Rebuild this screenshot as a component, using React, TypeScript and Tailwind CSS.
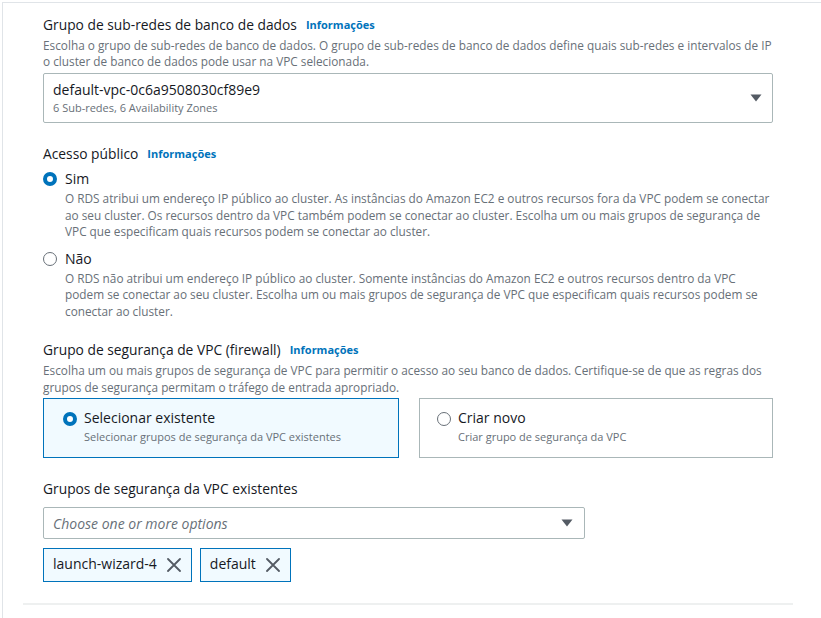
const font = { fontFamily: '"Open Sans", "Liberation Sans", sans-serif' };

function Info() {
  return <span className="ml-[9px] text-[11px] font-bold text-[#0073bb]">Informações</span>;
}

function Caret() {
  return (
    <svg width="12" height="8" viewBox="0 0 12 8" className="shrink-0">
      <path d="M0.5 0.5 H11.5 L6 7.5 Z" fill="#545b64" />
    </svg>
  );
}

function Close() {
  return (
    <svg width="14" height="14" viewBox="0 0 14 14" className="shrink-0">
      <path d="M1 1 L13 13 M13 1 L1 13" stroke="#545b64" strokeWidth="1.8" strokeLinecap="round" />
    </svg>
  );
}

function Radio({ checked }: { checked: boolean }) {
  return checked ? (
    <span className="block h-[14px] w-[14px] shrink-0 rounded-full border-[4px] border-[#0073bb] bg-white" />
  ) : (
    <span className="block h-[14px] w-[14px] shrink-0 rounded-full border-[1.5px] border-[#687078] bg-white" />
  );
}

function Token({ label }: { label: string }) {
  return (
    <div className="flex h-[34px] items-center gap-[10px] border border-[#0073bb] bg-[#f1faff] pl-[9px] pr-[10px] text-[14px] text-[#16191f]">
      <span className="-mt-[4px]">{label}</span>
      <Close />
    </div>
  );
}

export default function App() {
  return (
    <div className="h-[618px] w-[821px] overflow-hidden bg-white pl-[2px] pt-[2px]" style={font}>
      <div className="h-full border-l border-t border-[#e0e4e8] pl-[40px] pt-[13px]">
        {/* Grupo de sub-redes */}
        <div className="flex items-center text-[13.8px] leading-[18px] text-[#16191f]">
          Grupo de sub-redes de banco de dados <Info />
        </div>
        <p className="mt-[3px] w-[736px] text-[11.8px] leading-[16px] text-[#687078]">
          Escolha o grupo de sub-redes de banco de dados. O grupo de sub-redes de banco de dados define quais sub-redes e intervalos de IP o cluster de banco de dados pode usar na VPC selecionada.
        </p>
        <div className="mt-[4px] flex h-[50px] w-[730px] items-center justify-between rounded-[2px] border border-[#aab7b8] pl-[9px] pr-[10px]">
          <div>
            <div className="text-[14px] leading-[20px] text-[#16191f]">default-vpc-0c6a9508030cf89e9</div>
            <div className="text-[11px] leading-[16px] text-[#687078]">6 Sub-redes, 6 Availability Zones</div>
          </div>
          <Caret />
        </div>

        {/* Acesso público */}
        <div className="mt-[22px] flex items-center text-[13.8px] leading-[18px] text-[#16191f]">
          Acesso público <Info />
        </div>
        <div className="mt-[6px] flex items-center gap-[8px]">
          <Radio checked />
          <span className="text-[14px] leading-[20px] text-[#16191f]">Sim</span>
        </div>
        <p className="ml-[22px] mt-[1px] w-[712px] text-[11.8px] leading-[16.5px] text-[#687078]">
          O RDS atribui um endereço IP público ao cluster. As instâncias do Amazon EC2 e outros recursos fora da VPC podem se conectar ao seu cluster. Os recursos dentro da VPC também podem se conectar ao cluster. Escolha um ou mais grupos de segurança de VPC que especificam quais recursos podem se conectar ao cluster.
        </p>
        <div className="mt-[9px] flex items-center gap-[8px]">
          <Radio checked={false} />
          <span className="text-[14px] leading-[20px] text-[#16191f]">Não</span>
        </div>
        <p className="ml-[22px] mt-[1px] w-[695px] text-[11.8px] leading-[16.5px] text-[#687078]">
          O RDS não atribui um endereço IP público ao cluster. Somente instâncias do Amazon EC2 e outros recursos dentro da VPC podem se conectar ao seu cluster. Escolha um ou mais grupos de segurança de VPC que especificam quais recursos podem se conectar ao cluster.
        </p>

        {/* Grupo de segurança */}
        <div className="mt-[22px] flex items-center text-[13.8px] leading-[18px] text-[#16191f]">
          Grupo de segurança de VPC (firewall) <Info />
        </div>
        <p className="mt-[3px] w-[736px] text-[11.8px] leading-[16.5px] text-[#687078]">
          Escolha um ou mais grupos de segurança de VPC para permitir o acesso ao seu banco de dados. Certifique-se de que as regras dos grupos de segurança permitam o tráfego de entrada apropriado.
        </p>
        <div className="mt-[3px] flex w-[730px] gap-[20px]">
          <div className="flex h-[60px] flex-1 gap-[7px] border border-[#0073bb] bg-[#f1faff] pl-[19px] pt-[10px]">
            <div className="mt-[3px]"><Radio checked /></div>
            <div>
              <div className="text-[14px] leading-[18px] text-[#16191f]">Selecionar existente</div>
              <div className="mt-[2px] text-[11px] leading-[16px] text-[#687078]">Selecionar grupos de segurança da VPC existentes</div>
            </div>
          </div>
          <div className="flex h-[60px] flex-1 gap-[7px] border border-[#aab7b8] bg-white pl-[17px] pt-[10px]">
            <div className="mt-[3px]"><Radio checked={false} /></div>
            <div>
              <div className="text-[14px] leading-[18px] text-[#16191f]">Criar novo</div>
              <div className="mt-[2px] text-[11px] leading-[16px] text-[#687078]">Criar grupo de segurança da VPC</div>
            </div>
          </div>
        </div>

        {/* Grupos existentes */}
        <div className="mt-[22px] text-[13.8px] leading-[18px] text-[#16191f]">Grupos de segurança da VPC existentes</div>
        <div className="mt-[9px] flex h-[32px] w-[542px] items-center justify-between rounded-[2px] border border-[#aab7b8] pl-[9px] pr-[11px]">
          <span className="text-[14px] italic text-[#687078]">Choose one or more options</span>
          <Caret />
        </div>
        <div className="mt-[9px] flex gap-[8px]">
          <Token label="launch-wizard-4" />
          <Token label="default" />
        </div>

        <div className="-ml-[20px] mt-[21px] h-[2px] w-[770px] bg-[#eef0f0]" />
      </div>
    </div>
  );
}
